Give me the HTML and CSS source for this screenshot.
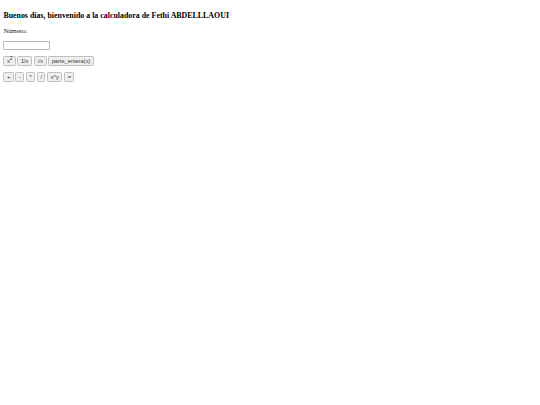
FILE: index.html
```html
<!DOCTYPE html>
<html lang="es">
<head>
<meta charset="utf-8">
<link rel="stylesheet" href="styles.css">
</head>
<body>
<h3 class="title">Buenos días, bienvenido a la calculadora de Fethi ABDELLLAOUI</h3>
<p class="row">Número:</p>
<p class="row"><input class="num" type="text"></p>
<p class="row"><button class="btn">x<sup>2</sup></button> <button class="btn">1/x</button> <button class="btn">√x</button> <button class="btn">parte_entera(x)</button></p>
<p class="row"><button class="btn">+</button> <button class="btn">-</button> <button class="btn">*</button> <button class="btn">/</button> <button class="btn">x^y</button> <button class="btn">=</button></p>
</body>
</html>
```
FILE: styles.css
```css
body {
  margin: 3.375px;
  font-family: "Liberation Serif", serif;
  font-size: 6.75px;
  color: #000;
  background: #fff;
}
.title {
  font-size: 7.9px;
  margin: 7.9px 0 3.375px;
}
.row {
  margin: 6.75px 0;
  color: #222;
}
.num {
  box-sizing: border-box;
  width: 46.8px;
  height: 8.9px;
  padding: 0;
  border: 1px solid #b8b8b8;
  border-radius: 1px;
  background: #fff;
  font-family: "Liberation Sans", sans-serif;
  font-size: 5.625px;
  vertical-align: middle;
}
.btn {
  font-family: "Liberation Sans", Arial, sans-serif;
  font-size: 5.625px;
  line-height: 6.5px;
  color: #333;
  background: #efefef;
  border: 1px solid #c0c0c0;
  border-radius: 1.3px;
  padding: 0.42px 2.53px;
}
.btn sup {
  font-size: 4.5px;
  line-height: 0;
}
```
